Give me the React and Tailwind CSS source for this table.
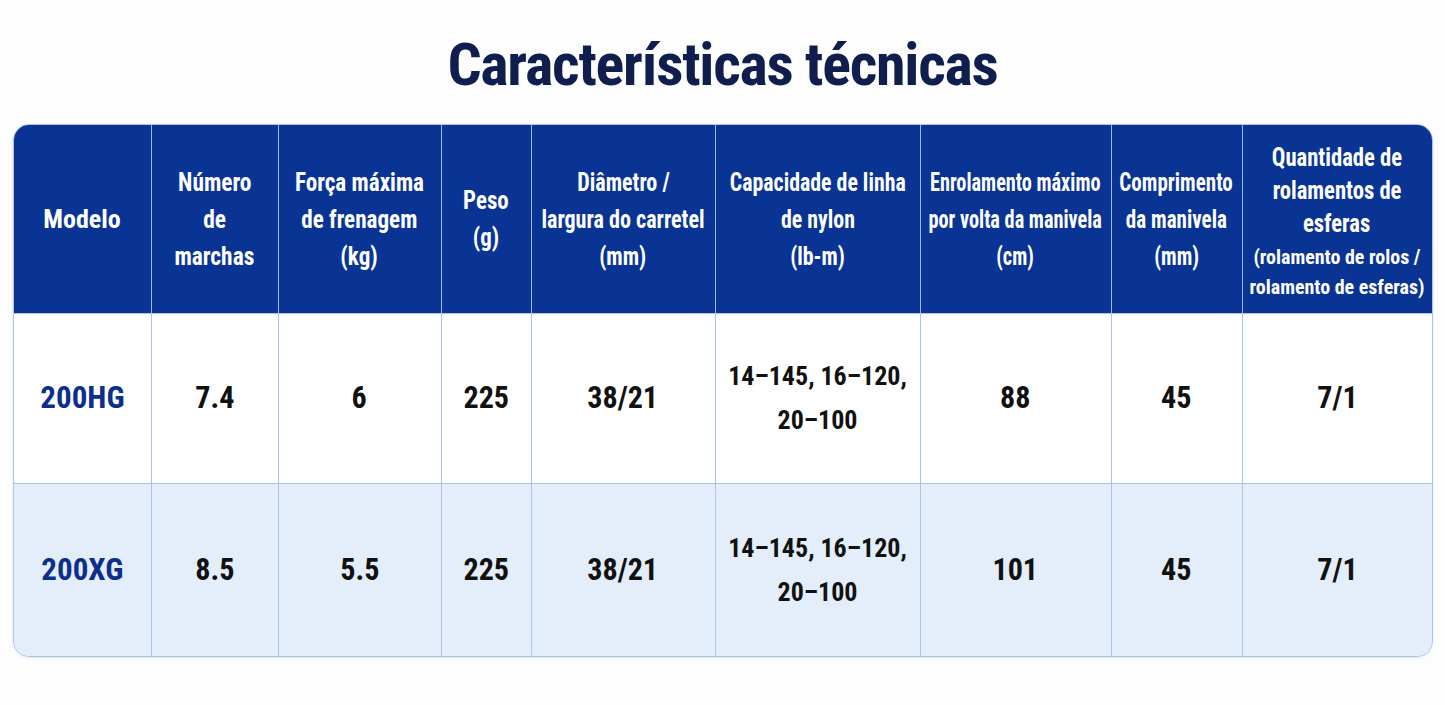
import React from "react";

const COLS =
  "grid grid-cols-[137px_127px_163px_90px_184px_205px_191px_131px_190px]";

const headers = [
  { lines: ["Modelo"], sx: "scale-x-100" },
  { lines: ["Número", "de", "marchas"], sx: "scale-x-[0.9]" },
  { lines: ["Força máxima", "de frenagem", "(kg)"], sx: "scale-x-[0.89]" },
  { lines: ["Peso", "(g)"], sx: "scale-x-[0.88]" },
  { lines: ["Diâmetro /", "largura do carretel", "(mm)"], sx: "scale-x-[0.85]" },
  { lines: ["Capacidade de linha", "de nylon", "(lb-m)"], sx: "scale-x-[0.84]" },
  {
    lines: ["Enrolamento máximo", "por volta da manivela", "(cm)"],
    sx: "scale-x-[0.78]",
  },
  { lines: ["Comprimento", "da manivela", "(mm)"], sx: "scale-x-[0.81]" },
];

const rows = [
  {
    model: "200HG",
    vals: ["7.4", "6", "225", "38/21", null, "88", "45", "7/1"],
    bg: "bg-white",
    h: "h-[169px]",
  },
  {
    model: "200XG",
    vals: ["8.5", "5.5", "225", "38/21", null, "101", "45", "7/1"],
    bg: "bg-[#e4eefa]",
    h: "h-[172px]",
  },
];

function HeaderCell({ lines, sx, first }) {
  return (
    <div
      className={`h-[188px] flex flex-col items-center justify-center text-center text-white text-[26px] leading-[37px] font-bold whitespace-nowrap ${
        first ? "" : "border-l border-[#9cb6e6]"
      }`}
    >
      {lines.map((l, i) => (
        <span key={i} className={`inline-block ${sx}`}>
          {l}
        </span>
      ))}
    </div>
  );
}

export default function App() {
  return (
    <div className="w-[1445px] h-[705px] bg-[#fdfdfe] font-['Roboto_Condensed','Roboto',sans-serif] flex flex-col items-center">
      <h1 className="mt-[35px] h-[60px] text-[60px] leading-[60px] font-bold text-[#0f1e4d] tracking-[-1.25px]">
        Características técnicas
      </h1>
      <div className="mt-[29px] w-[1420px] rounded-[16px] border border-[#a9c3eb] overflow-hidden shadow-[0_1px_2px_rgba(60,100,170,0.15)]">
        <div className={`${COLS} bg-[#0a3493]`}>
          {headers.map((h, i) => (
            <HeaderCell key={i} lines={h.lines} sx={h.sx} first={i === 0} />
          ))}
          <div className="h-[188px] border-l border-[#9cb6e6] flex flex-col items-center justify-center text-center text-white font-bold whitespace-nowrap pt-[5px]">
            <span className="inline-block scale-x-[0.87] text-[26px] leading-[33px]">
              Quantidade de
            </span>
            <span className="inline-block scale-x-[0.87] text-[26px] leading-[33px]">
              rolamentos de
            </span>
            <span className="inline-block scale-x-[0.87] text-[26px] leading-[33px]">
              esferas
            </span>
            <span className="inline-block scale-x-[0.95] text-[21px] leading-[30px] mt-[2px]">
              (rolamento de rolos /
            </span>
            <span className="inline-block scale-x-[0.95] text-[21px] leading-[30px]">
              rolamento de esferas)
            </span>
          </div>
        </div>
        {rows.map((r, ri) => (
          <div
            key={ri}
            className={`${COLS} ${r.bg} border-t border-[#a9c3eb]`}
          >
            <div
              className={`${r.h} flex items-center justify-center text-[32px] font-bold text-[#0c2f8c] pb-[3px]`}
            >
              <span className="inline-block scale-x-[0.97]">{r.model}</span>
            </div>
            {r.vals.map((v, i) => (
              <div
                key={i}
                className="border-l border-[#a9c3eb] flex items-center justify-center text-center font-bold text-[#111111]"
              >
                {v === null ? (
                  <div className="flex flex-col items-center text-[26px] leading-[44px] whitespace-nowrap pb-[1px]">
                    <span>14–145, 16–120,</span>
                    <span>20–100</span>
                  </div>
                ) : (
                  <span className="inline-block scale-x-[0.94] text-[32px] pb-[3px]">
                    {v}
                  </span>
                )}
              </div>
            ))}
          </div>
        ))}
      </div>
    </div>
  );
}
